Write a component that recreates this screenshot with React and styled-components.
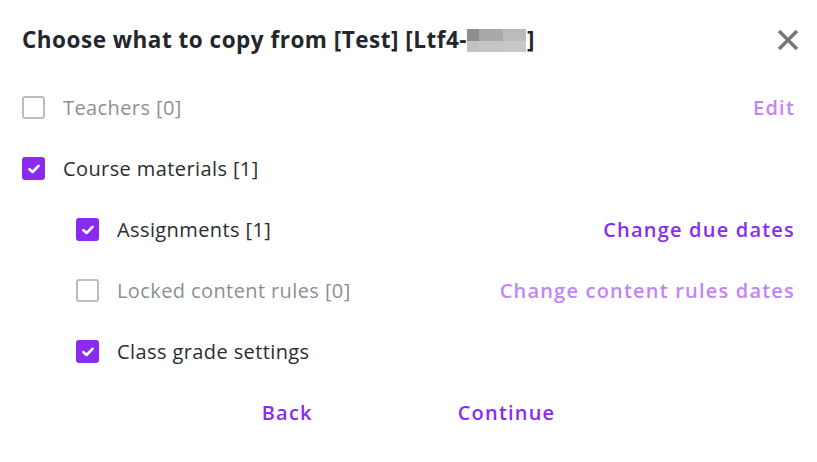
import React from "react";
import styled, { createGlobalStyle } from "styled-components";

const GlobalStyle = createGlobalStyle`
  body {
    margin: 0;
    background: #ffffff;
    font-family: "Open Sans", "Noto Sans", sans-serif;
  }
`;

const PURPLE = "#8a2bf2";
const PURPLE_LIGHT = "#c285f9";

const items = [
  { label: "Teachers [0]", checked: false, indent: false, link: "Edit", linkActive: false },
  { label: "Course materials [1]", checked: true, indent: false },
  { label: "Assignments [1]", checked: true, indent: true, link: "Change due dates", linkActive: true },
  { label: "Locked content rules [0]", checked: false, indent: true, link: "Change content rules dates", linkActive: false },
  { label: "Class grade settings", checked: true, indent: true },
];

function App() {
  return (
    <>
      <GlobalStyle />
      <Dialog>
        <Header>
          <Title>
            Choose what to copy from [Test] [Ltf4-<Redacted>
              <Cell tone="#8d8d8d" />
              <Cell tone="#a9a9a9" />
              <Cell tone="#bbbbbb" />
              <Cell tone="#c2c2c2" />
              <Cell tone="#c6c6c6" />
              <Cell tone="#c8c8c8" />
            </Redacted>]
          </Title>
          <Close aria-label="Close">
            <svg width="22" height="22" viewBox="0 0 22 22">
              <path d="M2 2 L20 20 M20 2 L2 20" stroke="#767676" strokeWidth="3.4" strokeLinecap="butt" />
            </svg>
          </Close>
        </Header>
        <List>
          {items.map((item) => (
            <Row key={item.label} indent={item.indent}>
              <Option>
                <Box checked={item.checked}>
                  {item.checked && (
                    <svg width="12" height="10" viewBox="0 0 12 10">
                      <path d="M1.5 5.2 L4.6 8 L10.5 1.8" fill="none" stroke="#fff" strokeWidth="2.6" strokeLinecap="round" strokeLinejoin="round" />
                    </svg>
                  )}
                </Box>
                <Label muted={!item.checked}>{item.label}</Label>
              </Option>
              {item.link && <LinkButton active={item.linkActive}>{item.link}</LinkButton>}
            </Row>
          ))}
        </List>
        <Footer>
          <FooterButton>Back</FooterButton>
          <FooterButton>Continue</FooterButton>
        </Footer>
      </Dialog>
    </>
  );
}

const Dialog = styled.div`
  width: 817px;
  height: 462px;
  box-sizing: border-box;
  padding: 18px 22px 0 22px;
  background: #ffffff;
`;

const Header = styled.div`
  display: flex;
  align-items: center;
  justify-content: space-between;
  height: 42px;
  margin-bottom: 17px;
`;

const Title = styled.h2`
  margin: 0;
  display: flex;
  align-items: center;
  font-size: 22.5px;
  font-weight: 700;
  letter-spacing: 0.5px;
  color: #24262b;
`;

const Redacted = styled.span`
  display: inline-grid;
  grid-template-columns: 12px 24px 23px;
  grid-template-rows: 12px 11px;
  margin: 2px 1px 0 0;
`;

const Cell = styled.span`
  background: ${(p) => p.tone};
`;

const Close = styled.button`
  border: none;
  background: transparent;
  padding: 0;
  margin-right: -4px;
  margin-top: 2px;
  display: flex;
  cursor: pointer;
`;

const List = styled.div`
  display: flex;
  flex-direction: column;
`;

const Row = styled.div`
  display: flex;
  align-items: center;
  justify-content: space-between;
  height: 61px;
  padding-left: ${(p) => (p.indent ? "54px" : "0")};
`;

const Option = styled.label`
  display: flex;
  align-items: center;
  gap: 18px;
`;

const Box = styled.span`
  width: 23px;
  height: 23px;
  box-sizing: border-box;
  border-radius: 3px;
  display: flex;
  align-items: center;
  justify-content: center;
  background: ${(p) => (p.checked ? PURPLE : "#fff")};
  border: ${(p) => (p.checked ? "none" : "2.5px solid #bdbdbd")};
`;

const Label = styled.span`
  font-size: 20px;
  letter-spacing: 0.4px;
  color: ${(p) => (p.muted ? "#8b9097" : "#2b2d31")};
`;

const LinkButton = styled.button`
  border: none;
  background: transparent;
  padding: 0;
  font-family: inherit;
  font-size: 20px;
  font-weight: 600;
  letter-spacing: 1.2px;
  color: ${(p) => (p.active ? PURPLE : PURPLE_LIGHT)};
  cursor: pointer;
`;

const Footer = styled.div`
  display: flex;
  justify-content: center;
  align-items: center;
  gap: 145px;
  height: 61px;
`;

const FooterButton = styled.button`
  border: none;
  background: transparent;
  padding: 0;
  font-family: inherit;
  font-size: 20px;
  font-weight: 600;
  letter-spacing: 1.2px;
  color: ${PURPLE};
  cursor: pointer;
`;

export default App;
